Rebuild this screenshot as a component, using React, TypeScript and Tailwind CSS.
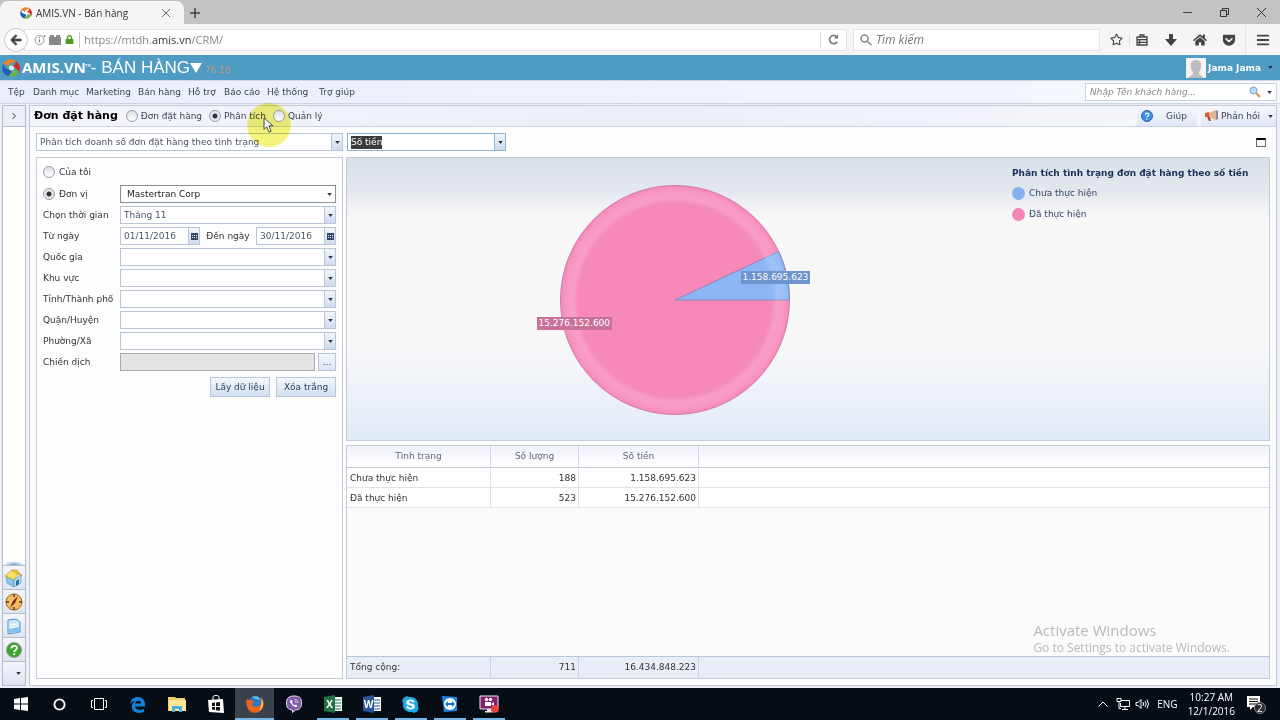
import { useState, type ReactNode } from "react";
import { FaArrowLeft, FaBars, FaEdge, FaGetPocket, FaHome, FaLock, FaRegStar, FaSkype } from "react-icons/fa";

type Option = { id: string; label: string };

const menus = [
  { label: "Tệp", className: "w-[25px]" },
  { label: "Danh mục", className: "w-[53px]" },
  { label: "Marketing", className: "w-[52px]" },
  { label: "Bán hàng", className: "w-[50px]" },
  { label: "Hỗ trợ", className: "w-[36px]" },
  { label: "Báo cáo", className: "w-[43px]" },
  { label: "Hệ thống", className: "w-[52px]" },
  { label: "Trợ giúp", className: "w-[50px]" },
];

const regions: Option[] = [
  { id: "country", label: "Quốc gia" },
  { id: "area", label: "Khu vực" },
  { id: "province", label: "Tỉnh/Thành phố" },
  { id: "district", label: "Quận/Huyện" },
  { id: "ward", label: "Phường/Xã" },
];

const rows = [
  { status: "Chưa thực hiện", count: "188", amount: "1.158.695.623" },
  { status: "Đã thực hiện", count: "523", amount: "15.276.152.600" },
];

const uiFont = "font-['Segoe_UI','Open_Sans',sans-serif]";
const radio =
  "size-3 shrink-0 appearance-none rounded-full border border-[#9a9ca5] bg-linear-to-b from-[#dcdfe8] to-white checked:bg-[radial-gradient(circle,#333_0_2px,#e6e8ef_3px)]";
const gridRow = "grid grid-cols-[144px_88px_120px_1fr]";

function Caret() {
  return (
    <svg viewBox="0 0 6 4" className="h-[3px] w-[5px]" aria-hidden="true">
      <path d="M0 0h6L3 4z" fill="#2b3345" />
    </svg>
  );
}

function Combo({ id, value = "", label, plain = false }: { id: string; value?: string; label?: string; plain?: boolean }) {
  return (
    <div className={`grid h-[18px] w-full border bg-white ${plain ? "border-[#8d8f96]" : "border-[#b9c6d6]"}`}>
      <select
        id={id}
        aria-label={label}
        className={`col-start-1 row-start-1 w-full appearance-none pr-4 outline-none ${plain ? "pl-[6px] text-[#222]" : "pl-[3px] text-[#4d5566]"}`}
      >
        <option>{value}</option>
      </select>
      <span
        className={`pointer-events-none col-start-1 row-start-1 flex w-[11px] items-center justify-center justify-self-end ${plain ? "" : "border-l border-[#b9c6d6] bg-linear-to-b from-[#f3f6fb] to-[#cfdbf0]"}`}
      >
        <Caret />
      </span>
    </div>
  );
}

function DateBox({ id, value }: { id: string; value: string }) {
  return (
    <div className="flex h-[18px] w-20 shrink-0 border border-[#b9c6d6] bg-white">
      <input id={id} defaultValue={value} className="w-0 flex-1 pl-[3px] text-[#4d5566] outline-none" />
      <button aria-label="Chọn ngày" className="flex w-[11px] items-center justify-center border-l border-[#b9c6d6] bg-linear-to-b from-[#f3f6fb] to-[#cfdbf0]">
        <svg viewBox="0 0 7 7" className="size-[7px]">
          <path d="M0 0h7v7H0z" fill="#38486b" />
          <path d="M1 2h1v1H1zM3 2h1v1H3zM5 2h1v1H5zM1 4h1v1H1zM3 4h1v1H3zM5 4h1v1H5z" fill="#dbe4f5" />
        </svg>
      </button>
    </div>
  );
}

function AmisMark({ className }: { className: string }) {
  return (
    <svg viewBox="0 0 20 20" className={className} aria-hidden="true">
      <path d="M1 7C3 0 12-2 17 4c-4-2-9 0-9 5-2-3-5-4-7-2z" fill="#f58220" />
      <path d="M15 2c6 4 6 10 3 14 0-4-2-7-7-8 3-1 5-3 4-6z" fill="#d7261e" />
      <path d="M19 13c-2 7-10 8-14 5 5 0 8-3 8-8 2 3 4 4 6 3z" fill="#6cb33f" />
      <path d="M7 19C0 17-1 10 2 5c0 5 4 7 9 7-1 3-2 5-4 7z" fill="#1d5fb0" />
      <circle cx="10.500" cy="10" r="2.800" fill="#fff" opacity=".8" />
    </svg>
  );
}

function BrowserChrome() {
  return (
    <div className={uiFont}>
      <div className="flex h-6 items-end justify-between bg-[#c3c3c3]">
        <div className="flex items-center">
          <div className="flex h-[23px] w-[184px] items-center rounded-t-lg bg-[#f5f5f5] pr-[14px] pl-5">
            <AmisMark className="size-3" />
            <span className="ml-1 flex-1 text-[10px] text-[#333]">AMIS.VN - Bán hàng</span>
            <button aria-label="Đóng thẻ">
              <svg viewBox="0 0 8 8" className="size-2" stroke="#666" fill="none"><path d="M0 0l8 8M8 0L0 8" /></svg>
            </button>
          </div>
          <button aria-label="Thẻ mới" className="ml-[6px]">
            <svg viewBox="0 0 10 10" className="size-[10px]" stroke="#444" strokeWidth="1.500"><path d="M5 0v10M0 5h10" /></svg>
          </button>
        </div>
        <div className="flex h-6 items-center gap-7 pr-[14px]">
          <button aria-label="Thu nhỏ"><svg viewBox="0 0 9 9" className="size-[9px]" stroke="#444"><path d="M0 4.500h9" /></svg></button>
          <button aria-label="Khôi phục">
            <svg viewBox="0 0 9 9" className="size-[9px]" stroke="#333" fill="none"><path d="M.5 2.500h6v6h-6zM2.500 2.500v-2h6v6h-2" /></svg>
          </button>
          <button aria-label="Đóng"><svg viewBox="0 0 9 9" className="size-[9px]" stroke="#333"><path d="M0 0l9 9M9 0L0 9" /></svg></button>
        </div>
      </div>
      <div className="flex h-[31px] items-center bg-[#f5f5f5] pr-[10px] pl-1">
        <button aria-label="Quay lại" className="z-10 flex size-6 items-center justify-center rounded-full border border-[#c9c9c9] bg-white text-[#444]">
          <FaArrowLeft size={12} stroke="currentColor" strokeWidth={30} />
        </button>
        <div className="-ml-1 flex h-[22px] flex-1 items-center border border-[#e3e3e3] bg-white pl-[9px]">
          <svg viewBox="0 0 12 12" className="size-3" fill="none" stroke="#999">
            <circle cx="5.500" cy="6" r="4.500" />
            <path d="M5.500 5.500v3M5.500 3v1.200" stroke="#777" />
            <circle cx="10.500" cy="2" r="1" fill="#888" stroke="none" />
          </svg>
          <svg viewBox="0 0 12 10" className="ml-[3px] h-[10px] w-3"><path d="M0 2h1V0h4v2h2V0h4v2h1v8H0z" fill="#888" /></svg>
          <FaLock size={9} color="#4a9a22" className="ml-1" />
          <span className="ml-[5px] h-4 w-px bg-[#ccc]" />
          {/* the host shows darker than the rest of the address */}
          <a href="https://mtdh.amis.vn/CRM/" className="ml-1 flex-1 text-[11px] text-[#888]">
            https://mtdh.<span className="text-[#333]">amis.vn</span>/CRM/
          </a>
          <button aria-label="Tải lại" className="flex h-4 w-[26px] items-center justify-center border-l border-[#ddd]">
            <svg viewBox="0 0 12 12" className="size-[11px]" fill="none" stroke="#777" strokeWidth="1.800">
              <path d="M10 8.500A4.500 4.500 0 1 1 9.500 3" />
              <path d="M11 .5v4.500H6.500z" fill="#777" stroke="none" />
            </svg>
          </button>
        </div>
        <div className="ml-[6px] flex h-[22px] w-[247px] items-center border border-[#e3e3e3] bg-white pl-[6px]">
          <svg viewBox="0 0 12 12" className="size-3" fill="none" stroke="#888" strokeWidth="1.500"><circle cx="4.500" cy="4.500" r="3.500" /><path d="M7 7l4.500 4" /></svg>
          <input aria-label="Tìm kiếm" placeholder="Tìm kiếm" className="ml-1 w-0 flex-1 text-[12px] italic outline-none placeholder:text-[#777]" />
        </div>
        <div className="ml-[10px] flex items-center text-[#444]">
          <button aria-label="Đánh dấu trang" className="pr-[6px]"><FaRegStar size={13} /></button>
          <button aria-label="Dấu trang" className="border-l border-[#ddd] pl-[6px]">
            <svg viewBox="0 0 12 12" className="size-3" fill="none" stroke="#444" strokeWidth="1.300"><path d="M1 3h10v8H1zM1 5.700h10M1 8.300h10M3.500 5.700V11M4 3V1h4v2" /></svg>
          </button>
          <button aria-label="Tải xuống" className="ml-[17px]">
            <svg viewBox="0 0 12 12" className="size-3"><path d="M4 0h4v5h4l-6 7-6-7h4z" fill="#444" /></svg>
          </button>
          <button aria-label="Trang chủ" className="ml-4"><FaHome size={14} /></button>
          <button aria-label="Pocket" className="ml-[15px]"><FaGetPocket size={14} /></button>
          <button aria-label="Trình đơn" className="ml-[9px] border-l border-[#e2e2e2] py-2 pl-[10px]"><FaBars size={14} /></button>
        </div>
      </div>
    </div>
  );
}

function AppHeader() {
  return (
    <>
      <header className="flex h-[25px] items-center justify-between bg-[#4e9bc4] pr-[7px] pl-[2px] text-white">
        <div className="flex items-center">
          <AmisMark className="size-[18px]" />
          <span className="ml-[2px] font-['Open_Sans',sans-serif] text-[15px] leading-none font-bold">AMIS.VN</span>
          <span className="-ml-px self-start text-[4px]">TM</span>
          <h1 className="font-['Liberation_Sans',sans-serif] text-[17px] leading-none">- BÁN HÀNG</h1>
          <button aria-label="Chọn phân hệ">
            <svg viewBox="0 0 12 10" className="h-[10px] w-3"><path d="M0 0h12L6 10z" fill="#fff" /></svg>
          </button>
          <span className="ml-[3px] pt-1 text-[#c49a7c]">76.16</span>
        </div>
        <button className="flex items-center gap-[2px] font-bold">
          <svg viewBox="0 0 20 20" className="size-5">
            <path d="M0 0h20v20H0z" fill="#f4f4f4" />
            <path d="M10 2c4 0 6 3 5 7 0 3-1 4-2 5v2l5 4H2l5-4v-2c-1-1-2-2-2-5C4 5 6 2 10 2z" fill="#bdbdbd" />
          </svg>
          Jama Jama
          <span className="ml-[5px]"><Caret /></span>
        </button>
      </header>
      <nav className="flex h-6 items-center justify-between border-y border-[#cdd3e2] bg-linear-to-r from-[#e9eef9] to-[#f6f8fd] pr-[3px] pl-2 text-[#3c4358]">
        <div className="flex">
          {menus.map((menu) => (
            <button key={menu.label} className={`${menu.className} text-left whitespace-nowrap`}>{menu.label}</button>
          ))}
        </div>
        <div className="flex h-[18px] w-[192px] items-center border border-[#ccd3e0] bg-white px-1">
          <input aria-label="Tìm khách hàng" placeholder="Nhập Tên khách hàng..." className="w-0 flex-1 italic outline-none placeholder:text-[#8a8a8a]" />
          <button aria-label="Tìm">
            <svg viewBox="0 0 12 12" className="size-3"><path d="M7 7l4 4" stroke="#e49335" strokeWidth="2.200" /><circle cx="4.500" cy="4.500" r="3.500" fill="#b9dcf7" stroke="#6ba2d8" /></svg>
          </button>
          <button aria-label="Tùy chọn tìm kiếm" className="ml-[6px]"><Caret /></button>
        </div>
      </nav>
    </>
  );
}

function SideIcon({ label, children }: { label: string; children: ReactNode }) {
  return (
    <button aria-label={label} className="flex h-6 items-center justify-center border-t border-[#b7bccb] bg-linear-to-b from-[#f4f6fb] to-[#dde3f1]">
      {children}
    </button>
  );
}

function Sidebar() {
  return (
    <aside className="flex w-6 flex-col border border-[#b7bccb] bg-white">
      <button aria-label="Mở rộng" className="flex h-[21px] items-center justify-center border-b border-[#b7bccb] bg-[#eceef5]">
        <svg viewBox="0 0 4 6" className="h-[6px] w-1" fill="none" stroke="#444"><path d="M.5 0l3 3-3 3" /></svg>
      </button>
      <div className="flex-1" />
      <div className="h-1 bg-[radial-gradient(ellipse_at_bottom,#5f9fc4,#fff_70%)]" />
      <SideIcon label="Trang chủ">
        <svg viewBox="0 0 18 18" className="size-[18px]">
          <path d="M1 7l8 4v7l-7-4z" fill="#8cc7ee" stroke="#3b84b8" strokeWidth=".6" />
          <path d="M9 11l7-5v8l-7 4z" fill="#bfe2f7" stroke="#3b84b8" strokeWidth=".6" />
          <path d="M7 1L0 7l9 4 4-6z" fill="#f8dc64" stroke="#b38f20" strokeWidth=".6" />
          <path d="M7 1l6 4 4 2-5-6z" fill="#f3cd4c" stroke="#b38f20" strokeWidth=".6" />
          <path d="M11 12l3-2v5l-3 2z" fill="#286fa8" />
        </svg>
      </SideIcon>
      <SideIcon label="Khám phá">
        <svg viewBox="0 0 18 18" className="size-[18px]">
          <circle cx="9" cy="9" r="8" fill="#f3bd66" stroke="#a56b1d" />
          <path d="M9 1v3M9 14v3M1 9h3M14 9h3" stroke="#5c3710" strokeWidth="1.500" />
          <path d="M13 3l-3 7-5 5 3-7z" fill="#7c2414" />
        </svg>
      </SideIcon>
      <SideIcon label="Tài liệu">
        <svg viewBox="0 0 18 18" className="size-[18px]">
          <path d="M3 3l8-1 4 3v10l-12 2z" fill="#cce7fa" stroke="#4599d3" />
          <path d="M5 8l8-1M5 10.500l8-1" stroke="#fff" />
          <path d="M4 12l10-2v5l-10 1z" fill="#84c2ee" />
        </svg>
      </SideIcon>
      <SideIcon label="Trợ giúp">
        <svg viewBox="0 0 18 18" className="size-[18px]">
          <circle cx="9" cy="9" r="7.500" fill="#39a42c" stroke="#999" />
          <path d="M6.500 7.500c0-3.500 5.500-3.500 5.500-.5 0 2-2.800 2-2.800 4" fill="none" stroke="#fff" strokeWidth="1.800" />
          <circle cx="9.200" cy="13.200" r="1.100" fill="#fff" />
        </svg>
      </SideIcon>
      <SideIcon label="Thêm"><span className="pl-2"><Caret /></span></SideIcon>
    </aside>
  );
}

function Cursor() {
  return (
    <>
      <span className="pointer-events-none absolute -right-[25px] -bottom-[24px] size-[44px] rounded-full bg-[#f4f47c] mix-blend-multiply" />
      <svg viewBox="0 0 12 18" className="pointer-events-none absolute -right-2 -bottom-[10px] z-10 h-4 w-[11px]">
        <path d="M1 1v13l3-3 2.500 6 2.500-1-2.500-6H11z" fill="#fff" stroke="#333" />
      </svg>
    </>
  );
}

function ViewSwitch() {
  const [view, setView] = useState("analysis");
  const views: Option[] = [
    { id: "orders", label: "Đơn đặt hàng" },
    { id: "analysis", label: "Phân tích" },
    { id: "manage", label: "Quản lý" },
  ];

  return (
    <div className="ml-2 flex gap-[7px] text-[#3c4358]">
      {views.map((item) => (
        <label key={item.id} className="relative flex items-center gap-[3px]">
          <input type="radio" name="view" className={radio} checked={view === item.id} onChange={() => setView(item.id)} />
          {item.label}
          {item.id === "analysis" && <Cursor />}
        </label>
      ))}
    </div>
  );
}

function FilterPanel() {
  return (
    <form onSubmit={(e) => e.preventDefault()} className="w-[307px] border border-[#c3cbd8] px-[6px] pt-[5px] text-[#333]">
      <label className="flex h-[18px] items-center gap-1">
        <input type="radio" name="scope" className={radio} />
        Của tôi
      </label>
      <div className="mt-1 grid auto-rows-[18px] grid-cols-[77px_1fr] items-center gap-y-[3px]">
        <label className="flex items-center gap-1">
          <input type="radio" name="scope" defaultChecked className={radio} />
          Đơn vị
        </label>
        <Combo id="unit" label="Đơn vị" value="Mastertran Corp" plain />
        <label htmlFor="period">Chọn thời gian</label>
        <Combo id="period" value="Tháng 11" />
        <label htmlFor="from">Từ ngày</label>
        <div className="flex items-center justify-between">
          <DateBox id="from" value="01/11/2016" />
          <label htmlFor="to">Đến ngày</label>
          <DateBox id="to" value="30/11/2016" />
        </div>
        {regions.map((region) => (
          <div key={region.id} className="contents">
            <label htmlFor={region.id} className="whitespace-nowrap">{region.label}</label>
            <Combo id={region.id} />
          </div>
        ))}
        <label htmlFor="campaign">Chiến dịch</label>
        <div className="flex gap-[3px]">
          <input id="campaign" readOnly className="h-[18px] w-0 flex-1 border border-[#a9abb0] bg-[#e4e4e4]" />
          <button aria-label="Chọn chiến dịch" className="h-[18px] w-[18px] border border-[#b9c6d6] bg-linear-to-b from-[#f5f8fc] to-[#d8e4f5]">...</button>
        </div>
      </div>
      <div className="mt-[6px] flex justify-end gap-[6px] text-[#2f3d5c]">
        <button className="h-5 w-[60px] border border-[#b9c6d6] bg-linear-to-b from-[#f5f8fc] to-[#cfdff3]">Lấy dữ liệu</button>
        <button className="h-5 w-[60px] border border-[#b9c6d6] bg-linear-to-b from-[#f5f8fc] to-[#cfdff3]">Xóa trắng</button>
      </div>
    </form>
  );
}

function Chart() {
  return (
    <section className="flex h-[284px] border border-[#c3cbd8] bg-[linear-gradient(#d9e0e9_0%,#e4e8ee_12%,#f0f1f4_17%,#f8f8f9_22%,#f8f8f9_66%,#edf1f8_84%,#dfeaf4_100%)]">
      <div className="flex flex-1 items-center justify-center pt-[2px]">
        <div className="relative size-[230px]">
          <svg viewBox="0 0 230 230" className="size-full">
            <defs>
              <radialGradient id="rim">
                <stop offset="84%" stopColor="#fff" stopOpacity="0" />
                <stop offset="89%" stopColor="#fff" stopOpacity=".17" />
                <stop offset="94%" stopColor="#fff" stopOpacity=".15" />
                <stop offset="100%" stopColor="#fff" stopOpacity="0" />
              </radialGradient>
            </defs>
            <circle cx="115" cy="115" r="114.500" fill="#f789b9" stroke="#cf7aa5" />
            <path d="M115 115L218.700 66.500A114.500 114.500 0 0 1 229.500 115z" fill="#8cb6f5" stroke="#8487bd" />
            <circle cx="115" cy="115" r="114.500" fill="url(#rim)" />
          </svg>
          <span className="absolute top-[86px] left-[181px] bg-[#6d94cc] px-[2px] leading-[13px] text-white">1.158.695.623</span>
          <span className="absolute top-[132px] -left-[23px] bg-[#ca7199] px-[2px] leading-[13px] text-white">15.276.152.600</span>
        </div>
      </div>
      <div className="w-[267px] pt-2 pl-[10px] whitespace-nowrap text-[#38486b]">
        <h3 className="mb-[2px] leading-[15px] font-bold text-[#1d2f57]">Phân tích tình trạng đơn đặt hàng theo số tiền</h3>
        <ul className="leading-[21px]">
          <li className="flex items-center gap-1"><span className="size-[13px] rounded-full bg-[#86b0ee]" />Chưa thực hiện</li>
          <li className="flex items-center gap-1"><span className="size-[13px] rounded-full bg-[#f285b3]" />Đã thực hiện</li>
        </ul>
      </div>
    </section>
  );
}

function StatusTable() {
  return (
    <table className="mt-1 flex flex-1 flex-col border border-[#c3cbd8] text-[#333]">
      <thead>
        <tr className={`${gridRow} h-[22px] items-stretch border-b border-[#c3cbd8] bg-linear-to-b from-[#f0f1fa] to-white leading-[21px] text-[#5f6880]`}>
          <th className="border-r border-[#d3d9e4] font-normal">Tình trạng</th>
          <th className="border-r border-[#d3d9e4] font-normal">Số lượng</th>
          <th className="border-r border-[#d3d9e4] font-normal">Số tiền</th>
          <th />
        </tr>
      </thead>
      <tbody className="flex-1 bg-[#fbfbfb]">
        {rows.map((row) => (
          <tr key={row.status} className={`${gridRow} h-5 border-b border-[#dfe3ea] bg-white leading-[20px]`}>
            <td className="border-r border-[#dfe3ea] pl-[3px]">{row.status}</td>
            <td className="border-r border-[#dfe3ea] pr-[2px] text-right">{row.count}</td>
            <td className="border-r border-[#dfe3ea] pr-[2px] text-right">{row.amount}</td>
            <td />
          </tr>
        ))}
      </tbody>
      <tfoot>
        <tr className={`${gridRow} h-[22px] border-t border-[#b8c6dc] bg-[#e9edf7] leading-[21px]`}>
          <td className="border-r border-[#c9d2e3] pl-[3px]">Tổng cộng:</td>
          <td className="border-r border-[#c9d2e3] pr-[2px] text-right">711</td>
          <td className="border-r border-[#c9d2e3] pr-[2px] text-right">16.434.848.223</td>
          <td />
        </tr>
      </tfoot>
    </table>
  );
}

function OfficeIcon({ letter, color }: { letter: string; color: string }) {
  return (
    <svg viewBox="0 0 20 20" className="size-5">
      <path d="M10 3h9v14h-9z" fill="#fff" />
      <path d="M12 6h6M12 9h6M12 12h6M12 15h6" stroke={color} />
      <path d="M1 3l11-2v18L1 17z" fill={color} />
      <text x="6.500" y="14" textAnchor="middle" fontSize="10" fontWeight="bold" fill="#fff" fontFamily="Open Sans, sans-serif">{letter}</text>
    </svg>
  );
}

const apps: { label: string; active?: boolean; open?: boolean; icon: ReactNode }[] = [
  { label: "Start", icon: <svg viewBox="0 0 14 14" className="size-[14px]"><path d="M0 2l6-1v5.500H0zM7 .9L14 0v6.500H7zM0 7.500h6V13l-6-1zM7 7.500h7V14l-7-1z" fill="#fff" /></svg> },
  { label: "Cortana", icon: <svg viewBox="0 0 14 14" className="size-[13px]"><circle cx="7" cy="7" r="5.500" fill="none" stroke="#fff" strokeWidth="2" /></svg> },
  { label: "Task View", icon: <svg viewBox="0 0 16 12" className="h-3 w-4" fill="none" stroke="#fff"><path d="M3.500.5h9v11h-9zM2 2.500H.5v7H2M14 2.500h1.500v7H14" /></svg> },
  {
    label: "Edge",
    icon: (
      <svg viewBox="0 0 18 18" className="size-[17px]">
        <path d="M1 8.500C2 3.500 5 1 9.300 1 14 1 17 4.500 17 9v2H6.300c.3 2.500 2.700 3.600 5.200 3.600 1.800 0 3.300-.5 4.500-1.200v3.400c-1.400.8-3.200 1.200-5.200 1.200C6 18 3 15.200 3 11.200c0-2.500 1.300-4.700 3.600-6C4.300 5.300 2.300 6.400 1 8.500zm5.500-.6h6.300c0-1.800-1-3-2.900-3-1.800 0-3 1.200-3.400 3z" fill="#1282dc" />
      </svg>
    ),
  },
  {
    label: "File Explorer",
    icon: <svg viewBox="0 0 18 16" className="h-4 w-[18px]"><path d="M0 1h7l1 1h9v13H0z" fill="#f2ce68" /><path d="M1 4h17v11H1z" fill="#fbe59a" /><path d="M4 16v-6h10v6h-3v-3H7v3z" fill="#4fb1d9" /></svg>,
  },
  {
    label: "Store",
    icon: <svg viewBox="0 0 18 20" className="h-5 w-[18px]"><path d="M6 6V3c0-2 6-2 6 0v3" fill="none" stroke="#fff" /><path d="M1 6l15-1 1 14-15-1z" fill="#fff" /><path d="M5 9l3-.4V12H5zM9 8.500l4-.5v4H9zM5 13h3v3l-3-.4zM9 13h4v3.800l-4-.5z" fill="#111" /></svg>,
  },
  {
    label: "Firefox",
    active: true,
    open: true,
    icon: (
      <svg viewBox="0 0 18 18" className="size-[18px]">
        <circle cx="9.500" cy="8" r="7" fill="#2d78c4" />
        <path d="M6 2c4-2 8 0 8 3-3-1-6-1-8-3z" fill="#6cb9e8" />
        <path d="M1 3c0 2 2 2 4 2 1 1 3 1 3 2l-2 2c0 3 5 4 8 1 2-2 2-5 1-8 4 4 3 11-1 14-5 4-12 1-13-5-1-3-1-6 0-8z" fill="#ea661c" />
        <path d="M15 3c4 5 2 11-2 13 2-3 3-8 2-13z" fill="#f9c43c" />
      </svg>
    ),
  },
  {
    label: "Viber",
    icon: (
      <svg viewBox="0 0 18 18" className="size-[18px]">
        <path d="M9 1c5.500 0 7.500 2 7.500 7s-2 6.800-6 7L7.500 17.500V15C3 14.500 1.500 12.500 1.500 8S3.500 1 9 1z" fill="#7d5ba6" stroke="#e7dff0" />
        <path d="M6 4.500c-1.500 1-1 2.500 0 4s2.500 3 4.500 3.700c1 .3 2-1 1.800-1.500L10.500 9.500l-1 .8C8.300 9.800 7.500 9 7 7.800L7.800 7z" fill="#fff" />
        <path d="M9.500 4.500c2 0 3.500 1.500 3.500 3.500M9.500 6.300c1 0 1.700.7 1.700 1.700" fill="none" stroke="#fff" strokeWidth=".8" />
      </svg>
    ),
  },
  { label: "Excel", open: true, icon: <OfficeIcon letter="X" color="#1f7244" /> },
  { label: "Word", open: true, icon: <OfficeIcon letter="W" color="#2a5699" /> },
  { label: "Skype", open: true, icon: <FaSkype size={19} color="#1ba9e6" className="rounded-full bg-[radial-gradient(circle,#fff_50%,transparent_52%)]" /> },
  {
    label: "TeamViewer",
    open: true,
    icon: <svg viewBox="0 0 18 18" className="size-[18px]"><path d="M1 1l15 1v14l-13 1z" fill="#1d87e8" /><circle cx="9" cy="9" r="6" fill="#fff" /><path d="M4 9l3-3v2h4V6l3 3-3 3v-2H7v2z" fill="#1473cf" /></svg>,
  },
  {
    label: "Recorder",
    open: true,
    icon: <svg viewBox="0 0 20 18" className="h-[18px] w-5"><path d="M1 1h18v13H1z" fill="#85206c" stroke="#f0e4ee" /><path d="M8 14h4v2H8zM6 16h8v1.500H6z" fill="#f0e4ee" /><circle cx="7.500" cy="4.500" r="1.700" fill="#fff" /><circle cx="11.500" cy="4.500" r="1.700" fill="#fff" /><path d="M6 7h6v4H6zM12 9l3-2v4z" fill="#fff" /><circle cx="16" cy="14" r="3.800" fill="#f0413c" /></svg>,
  },
];

function Taskbar() {
  return (
    <footer className={`${uiFont} flex h-8 justify-between bg-[#060d14] pl-px text-white`}>
      <div className="flex">
        {apps.map((app) => (
          <button
            key={app.label}
            aria-label={app.label}
            className={`flex w-[39px] flex-col items-center ${app.active ? "bg-[#3a434b]" : ""}`}
          >
            <span className={`flex flex-1 items-center ${app.open ? "pt-[2px]" : ""}`}>{app.icon}</span>
            {app.open && <span className={`h-[2px] bg-[#76b5e8] ${app.active ? "w-full" : "w-8"}`} />}
          </button>
        ))}
      </div>
      <div className="flex items-center pr-[14px] text-[10px]">
        <svg viewBox="0 0 10 6" className="h-[6px] w-[10px]" fill="none" stroke="#fff"><path d="M.5 5.500L5 1l4.500 4.500" /></svg>
        <svg viewBox="0 0 14 12" className="ml-2 h-3 w-[14px]" fill="none" stroke="#fff"><path d="M5 2.500h8.500v6H4.500V5M1 .5h4v3H1zM3 4v6.500h2M6 11.500h6M9 9v2" /></svg>
        <svg viewBox="0 0 14 12" className="ml-[5px] h-3 w-[14px]" fill="none" stroke="#fff"><path d="M1 4.500h2l3-3v9l-3-3H1zM8 4q1.500 2 0 4M10 3q2.500 3 0 6M12 1.500q3 4.500 0 9" /></svg>
        <span className="ml-2">ENG</span>
        <div className="ml-[10px] text-center leading-[14px]">
          <div>10:27 AM</div>
          <div>12/1/2016</div>
        </div>
        <div className="relative ml-3 h-5 w-[19px]">
          <svg viewBox="0 0 19 20" className="size-full">
            <path d="M0 2h13v11H6l-3 3v-3H0z" fill="#fff" />
            <path d="M2 5h9M2 7.500h9M2 10h9" stroke="#111" />
            <circle cx="13" cy="14" r="5.500" fill="#2b2b2b" stroke="#888" />
          </svg>
          <span className="absolute top-[8px] left-[10px] text-[10px] leading-[12px]">2</span>
        </div>
      </div>
    </footer>
  );
}

export default function App() {
  return (
    <div className="flex min-h-screen flex-col bg-[#eef0f8] font-['DejaVu_Sans',sans-serif] text-[9px] leading-[14px]">
      <BrowserChrome />
      <AppHeader />
      <div className="flex flex-1 gap-[3px] pt-px pr-[3px] pb-[2px] pl-[2px]">
        <Sidebar />
        <main className="flex flex-1 flex-col border border-[#c3c6d6] bg-[#fdfdfd]">
          <div className="flex h-[21px] items-center justify-between border-b border-[#cdd0df] bg-linear-to-r from-[#f4f5fb] via-[#eceef7] to-[#f7f8fc] pl-1">
            <div className="flex items-center">
              <h2 className="text-[11px] font-bold text-black">Đơn đặt hàng</h2>
              <ViewSwitch />
            </div>
            <div className="flex h-full gap-1 text-[#3c4358]">
              <button className="flex w-[60px] items-center gap-[13px] bg-linear-to-b from-[#f7f8fd] to-[#dfe6f7] pl-1">
                <svg viewBox="0 0 12 12" className="size-3"><circle cx="6" cy="6" r="5.500" fill="#3c8fe0" stroke="#2a69ad" /><path d="M4.300 4.800c0-2.300 3.500-2.300 3.500-.2 0 1.300-1.800 1.400-1.800 2.700M6 8.500v1.200" fill="none" stroke="#fff" strokeWidth="1.200" /></svg>
                Giúp
              </button>
              <button className="flex w-[75px] items-center gap-[3px] bg-linear-to-b from-[#f7f8fd] to-[#dfe6f7] pl-1">
                <svg viewBox="0 0 13 12" className="h-3 w-[13px]"><path d="M0 3l4-1v5H0z" fill="#dd5a36" /><path d="M4 3l7-3v10L4 7z" fill="#e2b48f" /><path d="M11 0l2 1v8l-2 1z" fill="#8d8d8d" /><path d="M2 7h3l1 4H4z" fill="#b9452a" /></svg>
                Phản hồi
                <span className="ml-auto pr-[3px]"><Caret /></span>
              </button>
            </div>
          </div>
          <div className="flex h-[30px] items-center gap-1 pr-[10px] pl-[6px]">
            <div className="w-[307px]">
              <Combo id="report" label="Báo cáo" value="Phân tích doanh số đơn đặt hàng theo tình trạng" />
            </div>
            <div className="flex h-[18px] w-[159px] items-center border border-[#8db5d0] bg-white pl-[3px]">
              <input aria-label="Chỉ tiêu" defaultValue="Số tiền" className="field-sizing-content h-[13px] bg-[#3b3b3b] text-white outline-none" />
              <button aria-label="Mở danh sách" className="ml-auto flex h-full w-[11px] items-center justify-center border-l border-[#8db5d0] bg-linear-to-b from-[#f3f6fb] to-[#cfdbf0]">
                <Caret />
              </button>
            </div>
            <button aria-label="Phóng to" className="ml-auto h-[9px] w-[10px] border border-t-2 border-[#666] border-t-black" />
          </div>
          <div className="flex flex-1 gap-[3px] px-[6px] pb-[6px]">
            <FilterPanel />
            <div className="relative flex flex-1 flex-col">
              <Chart />
              <StatusTable />
              <div className={`${uiFont} pointer-events-none absolute right-10 bottom-[23px] text-[#b9b9b9]`}>
                <p className="text-[15px] leading-5">Activate Windows</p>
                <p className="text-[12px] leading-4">Go to Settings to activate Windows.</p>
              </div>
            </div>
          </div>
        </main>
      </div>
      <Taskbar />
    </div>
  );
}
